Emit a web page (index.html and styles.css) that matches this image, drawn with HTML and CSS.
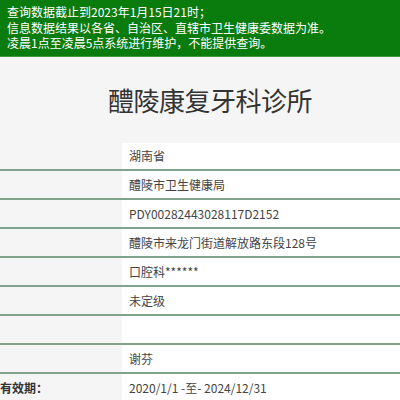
FILE: index.html
```html
<!DOCTYPE html>
<html lang="zh-CN">
<head>
<meta charset="utf-8">
<link rel="stylesheet" href="styles.css">
</head>
<body>
<div class="notice">
  <p>查询数据截止到2023年1月15日21时；</p>
  <p>信息数据结果以各省、自治区、直辖市卫生健康委数据为准。</p>
  <p>凌晨1点至凌晨5点系统进行维护，不能提供查询。</p>
</div>
<h1 class="title">醴陵康复牙科诊所</h1>
<div class="table">
  <div class="row"><div class="label"></div><div class="value">湖南省</div></div>
  <div class="row"><div class="label"></div><div class="value">醴陵市卫生健康局</div></div>
  <div class="row"><div class="label"></div><div class="value">PDY00282443028117D2152</div></div>
  <div class="row"><div class="label"></div><div class="value">醴陵市来龙门街道解放路东段128号</div></div>
  <div class="row"><div class="label"></div><div class="value">口腔科******</div></div>
  <div class="row"><div class="label"></div><div class="value">未定级</div></div>
  <div class="row"><div class="label"></div><div class="value"></div></div>
  <div class="row"><div class="label"></div><div class="value">谢芬</div></div>
  <div class="row"><div class="label"><span class="cut">有效期：</span></div><div class="value">2020/1/1 -至- 2024/12/31</div></div>
</div>
</body>
</html>
```
FILE: styles.css
```css
html, body {
  margin: 0;
  padding: 0;
  background: #f5f5f5;
  font-family: "Noto Sans CJK SC", "Noto Sans", sans-serif;
  overflow: hidden;
}
.notice {
  background: #0a7b0d;
  color: #fff;
  font-size: 12px;
  line-height: 15.5px;
  padding: 4px 7px 5px;
  border-bottom: 1px solid #3f9a42;
}
.notice p {
  margin: 0;
  white-space: nowrap;
}
.title {
  margin: 0;
  height: 86px;
  line-height: 86px;
  font-size: 26px;
  font-weight: normal;
  color: #333;
  text-align: center;
  padding-left: 20px;
  letter-spacing: -0.5px;
}
.table {
  display: flex;
  flex-direction: column;
}
.row {
  display: grid;
  grid-template-columns: 122px 1fr;
  height: 29px;
  border-bottom: 2px solid #7fa38c;
  box-sizing: border-box;
}
.row:first-child {
  height: 28px;
}
.label {
  background: #f5f5f5;
  font-size: 12px;
  font-weight: bold;
  color: #333;
  display: flex;
  align-items: center;
  overflow: hidden;
}
.cut {
  white-space: nowrap;
}
.value {
  background: #fff;
  font-size: 12px;
  color: #444;
  display: flex;
  align-items: center;
  padding-left: 7px;
  white-space: nowrap;
}
```
